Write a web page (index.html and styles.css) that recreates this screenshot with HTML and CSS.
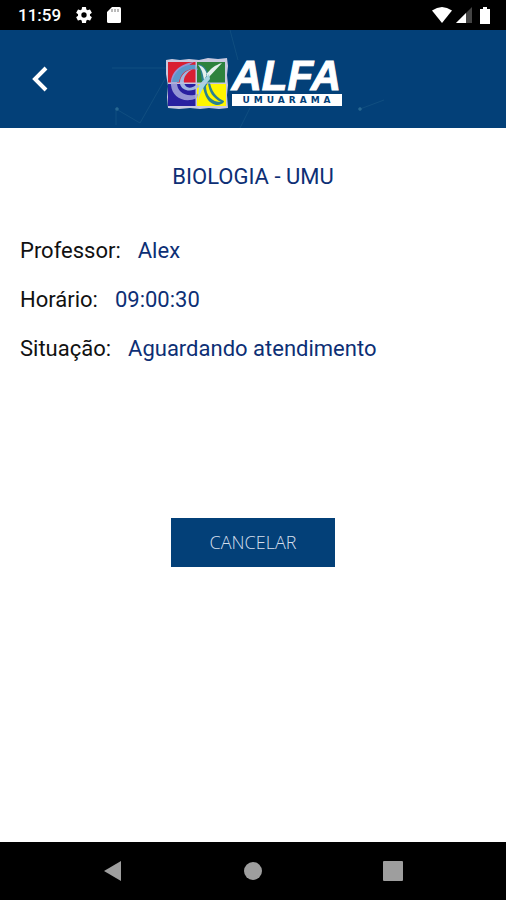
FILE: index.html
```
<!DOCTYPE html>
<html lang="pt-BR">
<head>
    <meta charset="UTF-8">
    <meta name="viewport" content="width=device-width, initial-scale=1.0">
    <title>Atendimento</title>
    <link rel="stylesheet" href="styles.css">
</head>
<body>
    <div class="status-bar">
        <div class="status-left">
            <span class="time">11:59</span>
            <svg width="20" height="20" viewBox="0 0 24 24" fill="#fff"><path d="M19.14 12.94c.04-.3.06-.61.06-.94s-.02-.64-.07-.94l2.03-1.58a.5.5 0 0 0 .12-.61l-1.92-3.32a.49.49 0 0 0-.59-.22l-2.39.96a7 7 0 0 0-1.62-.94l-.36-2.54a.48.48 0 0 0-.48-.41h-3.84a.47.47 0 0 0-.47.41l-.36 2.54c-.59.24-1.13.57-1.62.94l-2.39-.96a.48.48 0 0 0-.59.22L2.74 8.87a.48.48 0 0 0 .12.61l2.03 1.58a5.9 5.9 0 0 0 0 1.88l-2.03 1.58a.5.5 0 0 0-.12.61l1.92 3.32c.12.22.37.29.59.22l2.39-.96c.5.38 1.03.7 1.62.94l.36 2.54c.05.24.24.41.48.41h3.84c.24 0 .44-.17.47-.41l.36-2.54a6.8 6.8 0 0 0 1.62-.94l2.39.96c.22.08.47 0 .59-.22l1.92-3.32a.48.48 0 0 0-.12-.61zM12 15.2a3.2 3.2 0 1 1 0-6.4 3.2 3.2 0 0 1 0 6.4z"/></svg>
            <svg width="14" height="16" viewBox="0 0 14 16"><path d="M5 0h7.5Q14 0 14 1.5v13q0 1.5-1.5 1.5h-11Q0 16 0 14.5V5z" fill="#fff"/><path d="M5 2v3M8 2v3M11 2v3" stroke="#777" stroke-width="1"/></svg>
        </div>
        <div class="status-right">
            <svg width="20" height="16" viewBox="0 0 20 16"><path d="M0 3.5Q10-3.5 20 3.5L10 16z" fill="#fff"/></svg>
            <svg width="16" height="16" viewBox="0 0 16 16"><path d="M0 16L16 0v16z" fill="#444"/><path d="M0 16L10 6v10z" fill="#fff"/></svg>
            <svg width="10" height="17" viewBox="0 0 10 17"><path d="M3 0h4v2h3v15H0V2h3z" fill="#fff"/></svg>
        </div>
    </div>

    <header class="header">
        <svg class="network" viewBox="0 0 506 98" fill="none" stroke="#1d5b88" stroke-width="1">
            <path d="M112 38h54M165 49L140 93l-24-14v16M230 0l8 30M250 78l-10 20M360 79l24-9" opacity=".5"/>
            <circle cx="117" cy="79" r="1.5" fill="#2b6d99"/>
            <circle cx="360" cy="79" r="1.5" fill="#2b6d99"/>
        </svg>
        <button class="back" type="button" aria-label="Voltar">
            <svg width="16" height="26" viewBox="0 0 16 26"><path d="M14 2L3 13l11 11" fill="none" stroke="#fff" stroke-width="4"/></svg>
        </button>
        <div class="logo">
            <svg width="64" height="52" viewBox="0 0 64 52">
                <path d="M1 2l6-1 8 1 9-1 10 1 9-2 10 1 9-1 1 8-1 9 1 10-1 10 1 13-9 1-10-1-9 1-10-1-11 1-11-1-1-11 1-11-2-12z" fill="#c9c9df"/>
                <path d="M3 4h28v21H3z" fill="#d91f32"/>
                <path d="M32 4h28v21H32z" fill="#2d823d"/>
                <path d="M3 26h28v22H3z" fill="#2820a0"/>
                <path d="M32 26h29v22H32z" fill="#fff500"/>
                <path d="M29 4C14 6 5 15 6 27s13 19 26 13l1-4C21 40 12 34 12 25S20 9 29 4z" fill="#9394d4"/>
                <path d="M31 7C20 5 9 12 7 24h7C16 14 23 9 33 12z" fill="#5c98ca"/>
                <path d="M28 11c-8 1-14 8-13 15 2 7 11 9 19 3l-1-3c-7 5-12 5-14-1-1-6 3-11 9-14z" fill="#9fb5df"/>
                <path d="M33 6c6 1 9 5 11 12 1 11 4 20 15 25 0 2-3 4-8 4-11-3-12-14-14-23-1-8-1-13-4-18z" fill="#2b8190"/>
                <path d="M42 17l-3 5c-1-6-2-11-6-15 5 1 8 5 9 10zM43 20L57 5c-7 2-12 6-16 12z" fill="#e4f0ed"/>
                <path d="M44 16l-10 11-1 18c1-8 4-15 12-24z" fill="#a4d4e2"/>
                <path d="M43 25c1 9 5 15 13 19-9 0-15-6-15-16z" fill="#fff500"/>
                <path d="M3 25h58M31 3v45" stroke="#c3c3df" stroke-width="1"/>
            </svg>
            <div class="wordmark">
                <span class="logo-name">ALFA</span>
                <span class="logo-city">UMUARAMA</span>
            </div>
        </div>
    </header>

    <main class="content">
        <h1>BIOLOGIA - UMU</h1>
        <dl class="details">
            <div class="row">
                <dt>Professor:</dt>
                <dd>Alex</dd>
            </div>
            <div class="row">
                <dt>Horário:</dt>
                <dd>09:00:30</dd>
            </div>
            <div class="row">
                <dt>Situação:</dt>
                <dd>Aguardando atendimento</dd>
            </div>
        </dl>
        <button class="cancel" type="button">CANCELAR</button>
    </main>

    <nav class="nav-bar">
        <button type="button" aria-label="Voltar"><svg width="20" height="20" viewBox="0 0 20 20"><path d="M1 10L18 0v20z" fill="#9e9e9e"/></svg></button>
        <button type="button" aria-label="Início"><svg width="20" height="20" viewBox="0 0 20 20"><circle cx="10" cy="10" r="9" fill="#9e9e9e"/></svg></button>
        <button type="button" aria-label="Recentes"><svg width="20" height="20" viewBox="0 0 20 20"><rect width="20" height="20" rx="1" fill="#9e9e9e"/></svg></button>
    </nav>
</body>
</html>
```
FILE: styles.css
```
* {
    box-sizing: border-box;
}

body {
    font-family: Roboto, sans-serif;
    margin: 0;
    min-height: 100vh;
    display: flex;
    flex-direction: column;
    background: #fff;
    color: #111;
}

button {
    border: none;
    background: none;
    padding: 0;
    cursor: pointer;
}

svg {
    display: block;
}

.status-bar {
    display: flex;
    justify-content: space-between;
    align-items: center;
    height: 30px;
    padding: 0 16px 0 18px;
    background: #000;
    color: #fff;
}

.status-left,
.status-right {
    display: flex;
    align-items: center;
}

.status-left {
    gap: 13px;
}

.status-right {
    gap: 4px;
}

.status-right svg:last-child {
    margin-left: 4px;
}

.time {
    font-size: 17px;
    font-weight: 500;
    line-height: 30px;
}

.header {
    position: relative;
    display: grid;
    grid-template-columns: 1fr auto 1fr;
    align-items: center;
    padding: 0 20px;
    background: #034078;
}

/* constellation lines behind the logo */
.network {
    position: absolute;
    top: 0;
    left: 0;
    width: 100%;
    height: 100%;
}

.back {
    position: relative;
    justify-self: start;
    padding: 0 12px;
}

.logo {
    position: relative;
    display: flex;
    align-items: flex-start;
    gap: 3px;
    padding: 28px 0 18px;
}

.wordmark {
    display: flex;
    flex-direction: column;
    width: 110px;
    color: #fff;
}

.logo-name {
    font: italic bold 42px/36px "Liberation Sans", sans-serif;
    -webkit-text-stroke: 1px #fff;
}

.logo-city {
    padding-left: 11px;
    background: #fff;
    color: #034078;
    font: bold 9px/12px "DejaVu Sans", sans-serif;
    letter-spacing: 4px;
}

.content {
    flex: 1;
    display: flex;
    flex-direction: column;
    padding: 33px 20px;
}

h1 {
    margin: 0 0 42px;
    font-size: 22px;
    font-weight: 400;
    line-height: 32px;
    text-align: center;
    color: #0d2f75;
}

.details {
    display: flex;
    flex-direction: column;
    gap: 17px;
    margin: 0 0 153px;
    font-size: 22px;
    line-height: 32px;
}

.row {
    display: flex;
    gap: 17px;
}

dd {
    margin: 0;
    color: #0d2f75;
}

.cancel {
    align-self: center;
    padding: 0 39px;
    background: #034078;
    color: #d5dfed;
    font-family: "Open Sans", sans-serif;
    font-size: 18px;
    font-weight: 300;
    line-height: 49px;
}

.nav-bar {
    display: flex;
    justify-content: center;
    gap: 120px;
    height: 58px;
    background: #000;
}
```
